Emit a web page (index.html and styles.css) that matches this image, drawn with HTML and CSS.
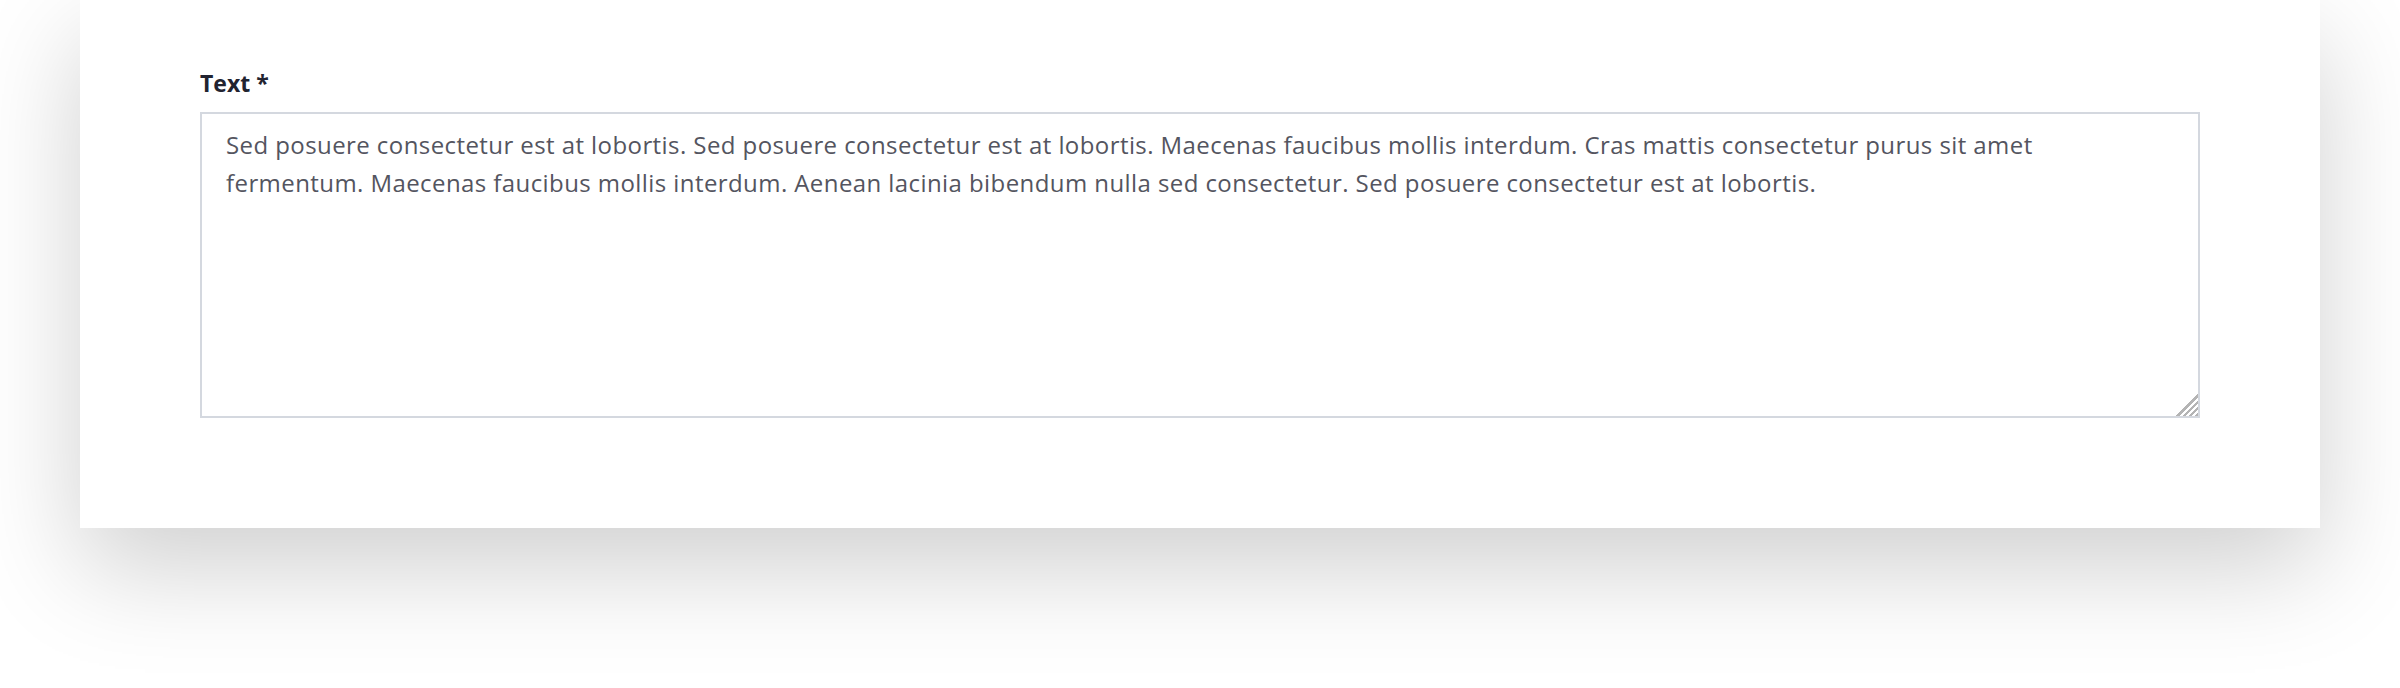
FILE: index.html
```html
<!DOCTYPE html>
<html lang="en">
<head>
<meta charset="utf-8">
<title>Text field</title>
<link rel="stylesheet" href="styles.css">
</head>
<body>
<div class="page">
  <form class="card">
    <div class="field">
      <label class="field-label" for="body-text">Text *</label>
      <textarea id="body-text" class="field-input">Sed posuere consectetur est at lobortis. Sed posuere consectetur est at lobortis. Maecenas faucibus mollis interdum. Cras mattis consectetur purus sit amet fermentum. Maecenas faucibus mollis interdum. Aenean lacinia bibendum nulla sed consectetur. Sed posuere consectetur est at lobortis.</textarea>
    </div>
  </form>
</div>
</body>
</html>
```
FILE: styles.css
```css
html, body {
  margin: 0;
  padding: 0;
  background: #ffffff;
}

.page {
  width: 2400px;
  height: 688px;
  overflow: hidden;
  padding: 0 80px;
  box-sizing: border-box;
}

.card {
  width: 2240px;
  height: 528px;
  box-sizing: border-box;
  padding: 68px 120px 0 120px;
  background: #ffffff;
  box-shadow: 0 40px 100px rgba(0, 0, 0, 0.19);
}

.field {
  display: flex;
  flex-direction: column;
  gap: 14px;
}

.field-label {
  font-family: "Open Sans", "Liberation Sans", sans-serif;
  font-weight: 700;
  font-size: 23px;
  line-height: 30px;
  letter-spacing: 0;
  color: #222330;
}

.field-input {
  display: block;
  width: 2000px;
  height: 306px;
  box-sizing: border-box;
  margin: 0;
  padding: 12px 70px 12px 24px;
  border: 2px solid #d4d8df;
  border-radius: 0;
  outline: none;
  resize: none;
  font-family: "Open Sans", "Liberation Sans", sans-serif;
  font-size: 24px;
  line-height: 38px;
  letter-spacing: 0.42px;
  font-variant-ligatures: none;
  color: #545560;
  background-color: #ffffff;
  background-image: linear-gradient(135deg,
    transparent 0 50%,
    #b4b4b4 50% 57%,
    transparent 57% 64%,
    #b4b4b4 64% 71%,
    transparent 71% 78%,
    #b4b4b4 78% 85%,
    transparent 85% 92%,
    #b4b4b4 92% 100%);
  background-size: 22px 22px;
  background-position: right bottom;
  background-repeat: no-repeat;
  overflow: hidden;
}
```
